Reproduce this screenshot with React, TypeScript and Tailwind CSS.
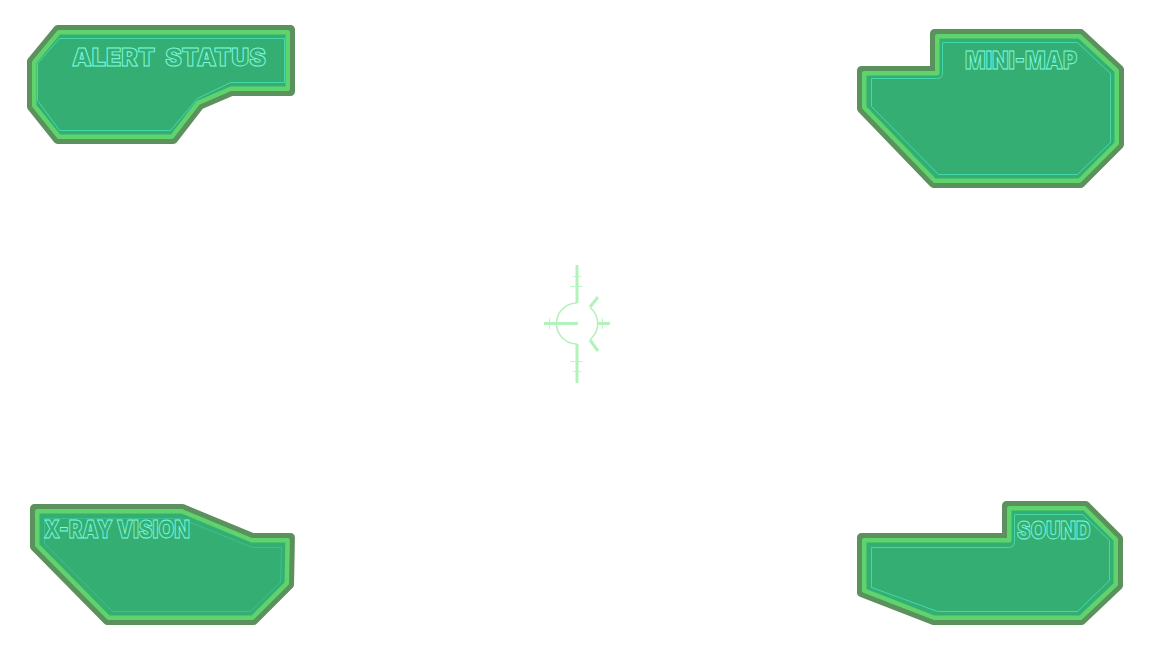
type P = [number, number];

function area(p: P[]) {
  let a = 0;
  p.forEach((v, i) => {
    const n = p[(i + 1) % p.length];
    a += v[0] * n[1] - n[0] * v[1];
  });
  return a;
}

function inset(p: P[], d: number): P[] {
  const s = area(p) > 0 ? 1 : -1;
  return p.map((v, i) => {
    const a = p[(i - 1 + p.length) % p.length];
    const b = p[(i + 1) % p.length];
    const u1 = [v[0] - a[0], v[1] - a[1]];
    const u2 = [b[0] - v[0], b[1] - v[1]];
    const l1 = Math.hypot(u1[0], u1[1]);
    const l2 = Math.hypot(u2[0], u2[1]);
    const n1 = [(-u1[1] / l1) * s, (u1[0] / l1) * s];
    const n2 = [(-u2[1] / l2) * s, (u2[0] / l2) * s];
    const k = 1 + n1[0] * n2[0] + n1[1] * n2[1];
    return [v[0] + (d * (n1[0] + n2[0])) / k, v[1] + (d * (n1[1] + n2[1])) / k] as P;
  });
}

const str = (p: P[]) => p.map((v) => v.join(",")).join(" ");

function Panel({
  box,
  outer,
  line,
  lineOpacity = 1,
  label,
  labelClass,
  className,
}: {
  box: [number, number, number, number];
  outer: P[];
  line: string;
  lineOpacity?: number;
  label: string;
  labelClass: string;
  className: string;
}) {
  return (
    <div className={`relative shrink-0 ${className}`}>
      <svg
        width={box[2]}
        height={box[3]}
        viewBox={box.join(" ")}
        className="block"
        fill="none"
        strokeLinejoin="round"
      >
        <polygon points={str(inset(outer, 3.5))} stroke="#5a915d" strokeWidth={9} />
        <polygon points={str(inset(outer, 6.25))} stroke="#60d46c" strokeWidth={4.5} fill="#35ae73" />
        <path d={line} transform="translate(0.5 0.5)" stroke="#45dcb0" strokeWidth={0.9} opacity={lineOpacity} />
      </svg>
      <span
        className={`absolute origin-left whitespace-nowrap font-['Inter',sans-serif] text-[24px] font-black leading-none text-transparent [-webkit-text-stroke:0.9px_#7dfbe0] ${labelClass}`}
      >
        {label}
      </span>
    </div>
  );
}

function Crosshair() {
  return (
    <svg
      width={80}
      height={130}
      viewBox="537 259 80 130"
      className="absolute left-[537px] top-[259px]"
      fill="none"
      stroke="#b3f2ba"
    >
      <path d="M577 265V303M577 344V383M544 323.5H578M598 323.5H610" strokeWidth={3} />
      <path d="M598 297L590 307M590 340L598 351" strokeWidth={3} />
      <path d="M577 303A20.500 20.500 0 0 0 577 344M590 307.500A20.500 20.500 0 0 1 590 339.500" strokeWidth={1.6} />
      <path d="M570 286.500H583M573 276.500H581M570 361.500H583M573 371.500H581M549.500 318V329M602.500 318V329" strokeWidth={1} opacity={0.8} />
    </svg>
  );
}

export default function App() {
  return (
    <div className="relative flex h-[648px] w-[1152px] flex-col justify-between overflow-hidden bg-white pb-[22px] pl-[26px] pr-[27px] pt-[24px]">
      <div className="flex items-start justify-between">
        <Panel
          box={[26, 24, 270, 121]}
          outer={[[56, 26], [294, 26], [294, 95], [232, 95], [202, 108], [175, 143], [56, 143], [28, 108], [28, 60]]}
          line="M59 38H284V82H230L197 98L170 130H59L37 100V63Z"
          label="ALERT STATUS"
          labelClass="left-[46px] top-[22px] scale-x-[1.04] [word-spacing:5px]"
          className=""
        />
        <Panel
          box={[855, 27, 270, 163]}
          outer={[[931, 30], [1082, 30], [1123, 68], [1123, 146], [1082, 187], [932, 187], [858, 110], [858, 67], [931, 67]]}
          line="M942 42H1077L1110 73V142L1077 174H938L871 106V78H936Q942 78 942 73Z"
          label="MINI-MAP"
          labelClass="left-[110px] top-[22px] scale-x-[0.9]"
          className="mt-[3px]"
        />
      </div>
      <div className="flex items-end justify-between">
        <Panel
          box={[29, 503, 267, 123]}
          outer={[[31, 505], [183, 505], [253, 534], [294, 534], [293, 586], [255, 624], [106, 624], [31, 548]]}
          line="M44 518H180L252 547H281L280 582L250 611H112L44 543Z"
          lineOpacity={0.45}
          label="X-RAY VISION"
          labelClass="left-[15px] top-[15px] scale-x-[0.85]"
          className="ml-[3px]"
        />
        <Panel
          box={[855, 499, 270, 127]}
          outer={[[1003, 502], [1087, 502], [1122, 537], [1122, 587], [1083, 624], [933, 624], [858, 595], [858, 534], [1003, 534]]}
          line="M1014 514H1082L1109 540V580L1077 611H937L871 587V547H1008Q1014 547 1014 541Z"
          label="SOUND"
          labelClass="left-[162px] top-[20px] scale-x-[0.84]"
          className=""
        />
      </div>
      <Crosshair />
    </div>
  );
}
